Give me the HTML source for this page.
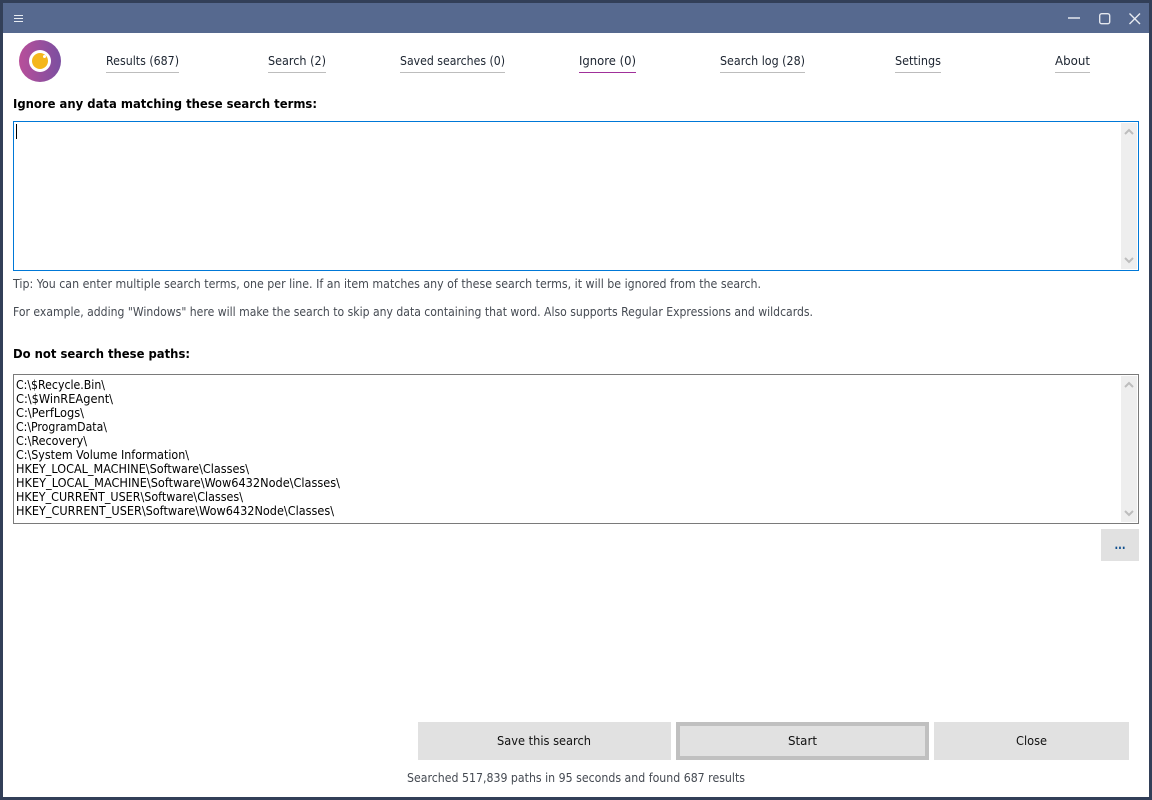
<!DOCTYPE html>
<html><head><meta charset="utf-8"><style>
html,body{margin:0;padding:0;width:1152px;height:800px;overflow:hidden;background:#fff}
svg{display:block}
text{font-family:"DejaVu Sans","Liberation Sans",sans-serif;font-size:12.2px;fill:#1c2430}
.g{fill:#454a52}
.b{font-weight:bold;fill:#000;font-size:12.5px}
.m{fill:#000}
</style></head><body>
<svg width="1152" height="800" viewBox="0 0 1152 800" xmlns="http://www.w3.org/2000/svg">
<defs><linearGradient id="lg" x1="0" y1="0" x2="1" y2="0"><stop offset="0" stop-color="#b84f9a"/><stop offset="1" stop-color="#7b4fa0"/></linearGradient></defs>
<rect width="1152" height="800" fill="#323f58"/>
<rect x="3" y="3" width="1146" height="30" fill="#56698f"/>
<rect x="3" y="33" width="1146" height="764" fill="#fff"/>
<path d="M14 15.500h9M14 18.500h9M14 21.500h9" stroke="#e8ecf2" stroke-width="1" fill="none"/>
<path d="M1068 18h12" stroke="#e4e7ee" stroke-width="1.500"/>
<rect x="1099.700" y="13.700" width="10" height="10" rx="2" fill="none" stroke="#e4e7ee" stroke-width="1.400"/>
<path d="M1129.500 13.500l10.500 10.500M1140 13.500l-10.500 10.500" stroke="#e8ebf1" stroke-width="1.400"/>
<circle cx="40" cy="61" r="21" fill="url(#lg)"/>
<circle cx="40" cy="61" r="11" fill="#fff"/>
<circle cx="40" cy="61" r="8" fill="#f4b61c"/>
<circle cx="44.500" cy="56.500" r="1.500" fill="#fff"/>
<text x="106" y="65" textLength="73" lengthAdjust="spacingAndGlyphs">Results (687)</text>
<text x="268" y="65" textLength="58" lengthAdjust="spacingAndGlyphs">Search (2)</text>
<text x="400" y="65" textLength="105" lengthAdjust="spacingAndGlyphs">Saved searches (0)</text>
<text x="579" y="65" textLength="57" lengthAdjust="spacingAndGlyphs">Ignore (0)</text>
<text x="720" y="65" textLength="85" lengthAdjust="spacingAndGlyphs">Search log (28)</text>
<text x="895" y="65" textLength="46" lengthAdjust="spacingAndGlyphs">Settings</text>
<text x="1055" y="65" textLength="35" lengthAdjust="spacingAndGlyphs">About</text>
<g fill="#bdbdbd">
<rect x="106" y="72" width="73" height="1"/>
<rect x="268" y="72" width="58" height="1"/>
<rect x="400" y="72" width="105" height="1"/>
<rect x="720" y="72" width="85" height="1"/>
<rect x="895" y="72" width="46" height="1"/>
<rect x="1055" y="72" width="35" height="1"/>
</g>
<rect x="579" y="72" width="57" height="1" fill="#a0309a"/>
<text class="b" x="13" y="108" textLength="304" lengthAdjust="spacingAndGlyphs">Ignore any data matching these search terms:</text>
<rect x="13.500" y="121.500" width="1125" height="149" fill="#fff" stroke="#0078d7"/>
<rect x="16" y="124" width="1" height="15" fill="#000"/>
<rect x="1121" y="123" width="16" height="146" fill="#eeeeee"/>
<path d="M1125 134l4-4 4 4M1125 258l4 4 4-4" fill="none" stroke="#bdbdbd" stroke-width="2"/>
<text class="g" x="13" y="288" textLength="748" lengthAdjust="spacingAndGlyphs">Tip: You can enter multiple search terms, one per line. If an item matches any of these search terms, it will be ignored from the search.</text>
<text class="g" x="13" y="316" textLength="800" lengthAdjust="spacingAndGlyphs">For example, adding "Windows" here will make the search to skip any data containing that word. Also supports Regular Expressions and wildcards.</text>
<text class="b" x="13" y="358" textLength="177" lengthAdjust="spacingAndGlyphs">Do not search these paths:</text>
<rect x="13.500" y="374.500" width="1125" height="149" fill="#fff" stroke="#7a7a7a"/>
<rect x="1121" y="376" width="16" height="146" fill="#eeeeee"/>
<path d="M1125 387l4-4 4 4M1125 511l4 4 4-4" fill="none" stroke="#bdbdbd" stroke-width="2"/>
<text class="m" x="16" y="389" textLength="89" lengthAdjust="spacingAndGlyphs">C:\$Recycle.Bin\</text>
<text class="m" x="16" y="403" textLength="97" lengthAdjust="spacingAndGlyphs">C:\$WinREAgent\</text>
<text class="m" x="16" y="417" textLength="68" lengthAdjust="spacingAndGlyphs">C:\PerfLogs\</text>
<text class="m" x="16" y="431" textLength="91" lengthAdjust="spacingAndGlyphs">C:\ProgramData\</text>
<text class="m" x="16" y="445" textLength="71" lengthAdjust="spacingAndGlyphs">C:\Recovery\</text>
<text class="m" x="16" y="459" textLength="173" lengthAdjust="spacingAndGlyphs">C:\System Volume Information\</text>
<text class="m" x="16" y="473" textLength="233" lengthAdjust="spacingAndGlyphs">HKEY_LOCAL_MACHINE\Software\Classes\</text>
<text class="m" x="16" y="487" textLength="324" lengthAdjust="spacingAndGlyphs">HKEY_LOCAL_MACHINE\Software\Wow6432Node\Classes\</text>
<text class="m" x="16" y="501" textLength="227" lengthAdjust="spacingAndGlyphs">HKEY_CURRENT_USER\Software\Classes\</text>
<text class="m" x="16" y="515" textLength="318" lengthAdjust="spacingAndGlyphs">HKEY_CURRENT_USER\Software\Wow6432Node\Classes\</text>
<rect x="1101" y="529" width="38" height="32" fill="#e1e1e1"/>
<text x="1114.500" y="549" textLength="11" lengthAdjust="spacingAndGlyphs" style="fill:#0f4f8f;font-weight:bold">...</text>
<rect x="418" y="722" width="253" height="38" fill="#e1e1e1"/>
<rect x="678" y="724" width="249" height="34" fill="#e1e1e1" stroke="#c0c0c0" stroke-width="4"/>
<rect x="934" y="722" width="195" height="38" fill="#e1e1e1"/>
<text x="497" y="745" textLength="94" lengthAdjust="spacingAndGlyphs" style="fill:#111">Save this search</text>
<text x="788" y="745" textLength="29" lengthAdjust="spacingAndGlyphs" style="fill:#111">Start</text>
<text x="1016" y="745" textLength="31" lengthAdjust="spacingAndGlyphs" style="fill:#111">Close</text>
<text class="g" x="407" y="782" textLength="338" lengthAdjust="spacingAndGlyphs">Searched 517,839 paths in 95 seconds and found 687 results</text>
</svg>
</body></html>
